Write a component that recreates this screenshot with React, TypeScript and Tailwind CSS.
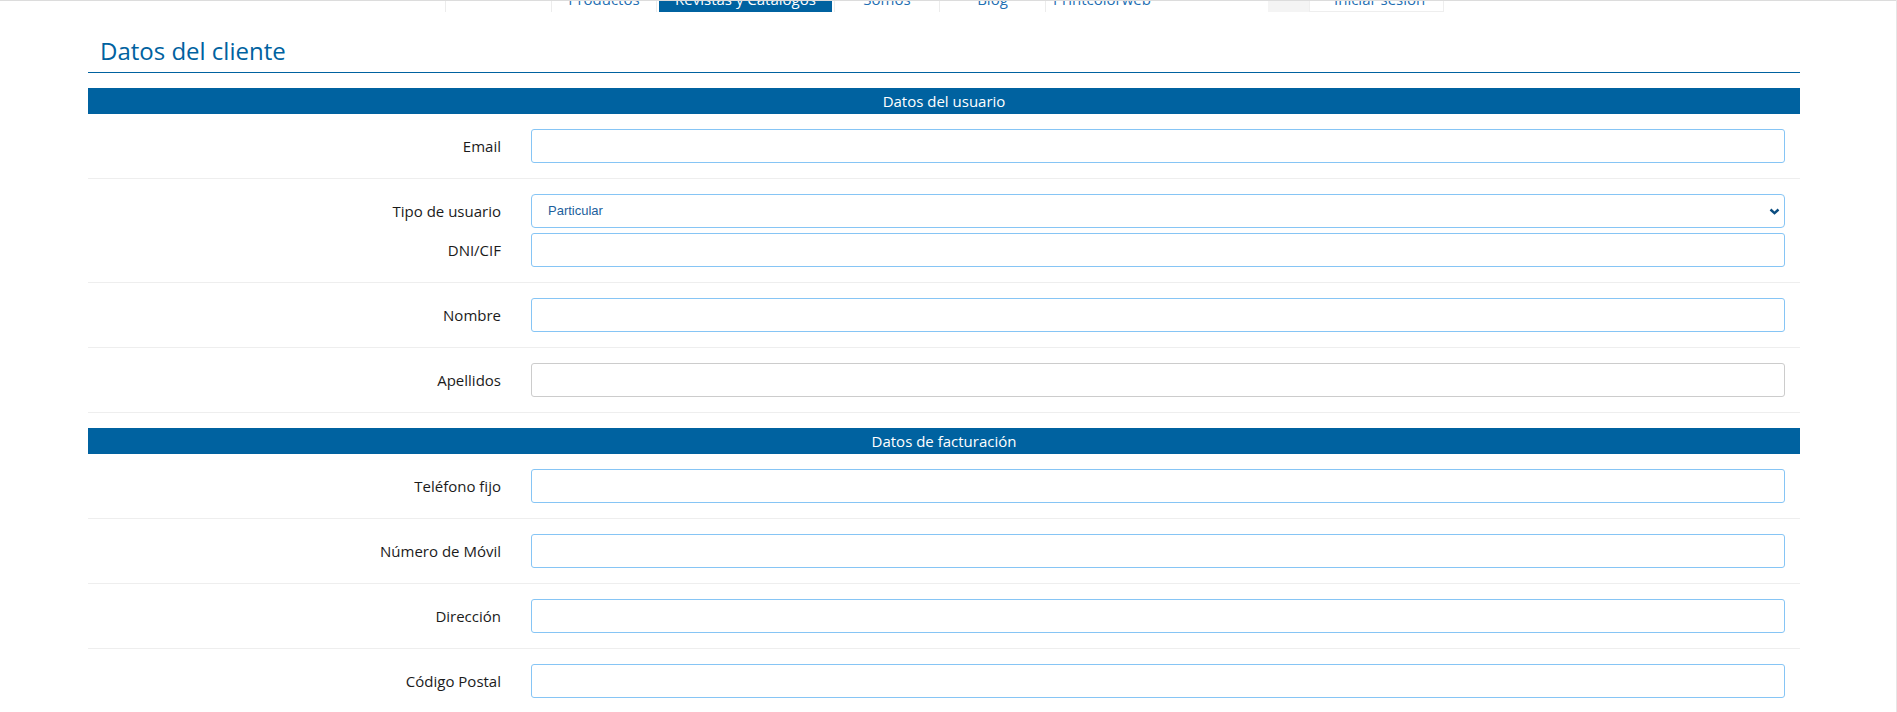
import { ChangeEvent, useState } from "react";

interface Field {
    label: string;
    name: string;
    muted?: boolean;
}

const userRows: Field[][] = [
    [{ label: "Email", name: "email" }],
    [{ label: "Tipo de usuario", name: "tipo" }, { label: "DNI/CIF", name: "dni" }],
    [{ label: "Nombre", name: "nombre" }],
    [{ label: "Apellidos", name: "apellidos", muted: true }],
];

const billingRows: Field[][] = [
    [{ label: "Teléfono fijo", name: "telefono" }],
    [{ label: "Número de Móvil", name: "movil" }],
    [{ label: "Dirección", name: "direccion" }],
    [{ label: "Código Postal", name: "cp" }],
];

const font = { fontFamily: '"Open Sans", "Noto Sans", sans-serif' };

function TopNav() {
    return (
        <div className="h-[12px] overflow-hidden border-t border-[#dcdcdc]">
            <div className="flex h-full pl-[445px] text-[15px] leading-[20px] text-[#1f6fb2]">
                <div className="w-[106px] border-l border-[#ececec]" />
                <div className="flex w-[105px] justify-center border-l border-[#ececec]">
                    <span className="-mt-[12px]">Productos</span>
                </div>
                <div className="flex border-l border-[#ececec] pl-[2px] pr-[2px]">
                    <div className="flex w-[173px] justify-center bg-[#0062a0] text-white">
                        <span className="-mt-[12px]">Revistas y Catálogos</span>
                    </div>
                </div>
                <div className="flex w-[105px] justify-center border-l border-[#ececec]">
                    <span className="-mt-[12px]">Somos</span>
                </div>
                <div className="flex w-[106px] justify-center border-l border-[#ececec]">
                    <span className="-mt-[12px]">Blog</span>
                </div>
                <div className="w-[223px] border-l border-[#ececec] pl-[7px]">
                    <span className="-mt-[12px] block">Printcolorweb</span>
                </div>
                <div className="flex w-[41px] justify-end bg-[#f4f4f4] pr-[10px] text-[#444]">
                    <span className="-mt-[12px]">·</span>
                </div>
                <div className="w-[135px] border border-t-0 border-[#eeeeee] pl-[24px]">
                    <span className="-mt-[12px] block">Iniciar sesión</span>
                </div>
            </div>
        </div>
    );
}

function SectionBar({ title }: { title: string }) {
    return (
        <div className="h-[26px] bg-[#0062a0] text-center text-[15px] font-medium leading-[26px] text-white">
            {title}
        </div>
    );
}

function FieldRow({
    field,
    values,
    onChange,
}: {
    field: Field;
    values: Record<string, string>;
    onChange: (e: ChangeEvent<HTMLInputElement | HTMLSelectElement>) => void;
}) {
    // Tipo de usuario is the only select on the page
    const isSelect = field.name === "tipo";

    return (
        <div className="flex items-center">
            <label className="w-1/4 pr-[15px] text-right text-[15px] text-[#1b1b1b]">
                {field.label}
            </label>
            <div className="w-3/4 px-[15px]">
                {isSelect ? (
                    <div className="relative">
                        <select
                            name={field.name}
                            value={values[field.name] ?? "particular"}
                            onChange={onChange}
                            className="h-[34px] w-full appearance-none rounded-[4px] border border-[#86c5f5] bg-white pl-[16px] text-[13px] text-[#1d5f9c] outline-none"
                            style={{ fontFamily: '"Liberation Sans", Arial, sans-serif' }}
                        >
                            <option value="particular">Particular</option>
                            <option value="empresa">Empresa</option>
                            <option value="autonomo">Autónomo</option>
                        </select>
                        <svg
                            className="pointer-events-none absolute right-[5px] top-[14px]"
                            width="11"
                            height="7"
                            viewBox="0 0 11 7"
                        >
                            <polyline points="1.5,1.5 5.5,5.2 9.5,1.5" fill="none" stroke="#0b4d80" strokeWidth="2.4" />
                        </svg>
                    </div>
                ) : (
                    <input
                        name={field.name}
                        value={values[field.name] ?? ""}
                        onChange={onChange}
                        className={`h-[34px] w-full rounded-[3px] border bg-white px-3 text-[14px] outline-none ${field.muted ? "border-[#cccccc]" : "border-[#86c5f5]"}`}
                    />
                )}
            </div>
        </div>
    );
}

function Section({
    title,
    rows,
    values,
    onChange,
}: {
    title: string;
    rows: Field[][];
    values: Record<string, string>;
    onChange: (e: ChangeEvent<HTMLInputElement | HTMLSelectElement>) => void;
}) {
    return (
        <div>
            <SectionBar title={title} />
            {rows.map((group) => (
                <div key={group[0].name} className="flex flex-col gap-[5px] border-b border-[#eeeeee] py-[15px]">
                    {group.map((field) => (
                        <FieldRow key={field.name} field={field} values={values} onChange={onChange} />
                    ))}
                </div>
            ))}
        </div>
    );
}

export default function App() {
    const [values, setValues] = useState<Record<string, string>>({});

    const handleChange = (e: ChangeEvent<HTMLInputElement | HTMLSelectElement>) => {
        setValues((prev) => ({ ...prev, [e.target.name]: e.target.value }));
    };

    return (
        <div className="h-[712px] w-full overflow-hidden border-r border-[#e6e6e6] bg-white" style={font}>
            <TopNav />

            <div className="ml-[88px] w-[1712px]">
                {/* Page title */}
                <div className="border-b border-[#0062a0] pb-[5px] pl-[12px] pt-[23px]">
                    <h1 className="text-[24px] font-normal leading-[32px] text-[#0062a0]">Datos del cliente</h1>
                </div>

                <div className="mt-[15px]">
                    <Section title="Datos del usuario" rows={userRows} values={values} onChange={handleChange} />
                </div>

                <div className="mt-[15px]">
                    <Section title="Datos de facturación" rows={billingRows} values={values} onChange={handleChange} />
                </div>
            </div>
        </div>
    );
}
